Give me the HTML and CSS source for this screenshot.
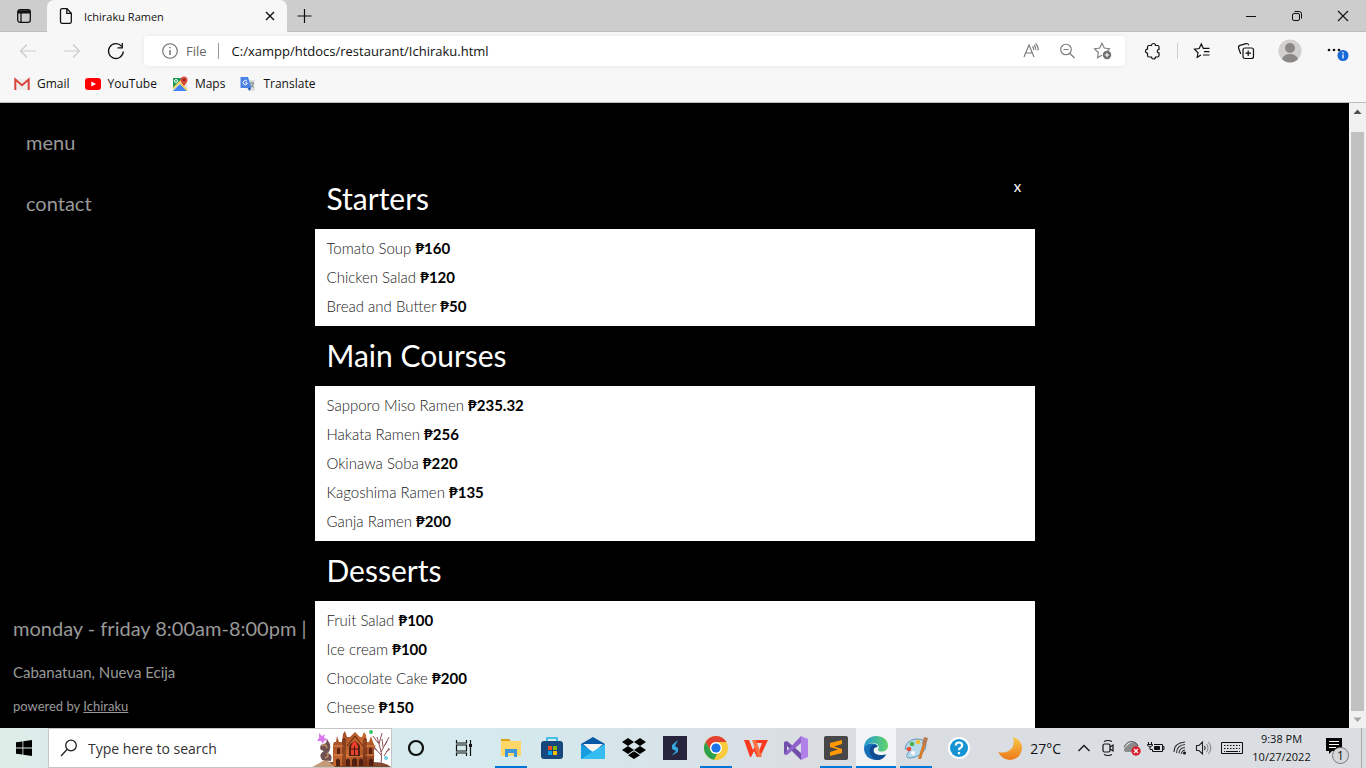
FILE: index.html
```html
<!DOCTYPE html>
<html lang="en">
<head>
<meta charset="utf-8">
<meta name="viewport" content="width=device-width, initial-scale=1">
<title>Ichiraku Ramen</title>
<link rel="stylesheet" href="styles.css">
</head>
<body>
<div class="desktop">
  <header class="browser">
    <div class="tabs">
      <button class="workspace" aria-label="Tab actions"><svg width="16" height="16" viewBox="0 0 16 16" fill="none" stroke="#111" stroke-width="1.3"><rect x="1.7" y="1.7" width="12.6" height="12.6" rx="2.2"/><path d="M2 3.2h12M2 4.4h12" stroke-width="2"/><path d="M5 5v9"/></svg></button>
      <div class="tab">
        <svg width="14" height="18" viewBox="0 0 14 18" fill="none" stroke="#111" stroke-width="1.3"><path d="M3 1.7h5l4.3 4.5v8.6a1.5 1.5 0 0 1-1.5 1.5H3a1.5 1.5 0 0 1-1.5-1.5V3.2A1.5 1.5 0 0 1 3 1.7zM7.8 2v4.4h4.4"/></svg>
        <span class="tab-title">Ichiraku Ramen</span>
        <button class="tab-close" aria-label="Close tab"><svg width="10" height="10" viewBox="0 0 10 10" stroke="#111" stroke-width="1.4"><path d="M1 1l8 8M9 1L1 9"/></svg></button>
      </div>
      <button class="new-tab" aria-label="New tab"><svg width="16" height="16" viewBox="0 0 16 16" stroke="#111" stroke-width="1.2"><path d="M7.5 1v14M.5 8h14"/></svg></button>
      <div class="window-controls">
        <button aria-label="Minimize"><svg width="10" height="10" viewBox="0 0 10 10" stroke="#111"><path d="M0 5.500h10"/></svg></button>
        <button aria-label="Restore"><svg width="12" height="12" viewBox="0 0 12 12" fill="none" stroke="#111"><rect x="1.500" y="3.500" width="7" height="7" rx="1.500"/><path d="M3.500 1.500h4.500a2.500 2.500 0 0 1 2.500 2.500v4.500"/></svg></button>
        <button aria-label="Close"><svg width="12" height="12" viewBox="0 0 12 12" stroke="#111" stroke-width="1.1"><path d="M1 1l10 10M11 1L1 11"/></svg></button>
      </div>
    </div>
    <div class="toolbar">
      <button class="tool" aria-label="Back"><svg width="18" height="16" viewBox="0 0 18 16" fill="none" stroke="#cbcbcb" stroke-width="1.2"><path d="M17 8H1.500M8 1.500L1.500 8 8 14.500"/></svg></button>
      <button class="tool" aria-label="Forward"><svg width="18" height="16" viewBox="0 0 18 16" fill="none" stroke="#cbcbcb" stroke-width="1.2"><path d="M1 8h15.500M10 1.500L16.500 8 10 14.500"/></svg></button>
      <button class="tool" aria-label="Refresh"><svg width="18" height="18" viewBox="0 0 18 18" fill="none" stroke="#111" stroke-width="1.3"><path d="M16.300 9.500a7.400 7.400 0 1 1-1.700-5.200M15.300 1v4.800h-4.800"/></svg></button>
      <div class="address">
        <svg width="18" height="18" viewBox="0 0 18 18" fill="none" stroke="#6b6b6b" stroke-width="1.1"><circle cx="9" cy="9" r="7.300"/><path d="M9 8v5M9 5v1.300" stroke-width="1.400"/></svg>
        <label class="scheme" for="url">File</label>
        <input class="url" id="url" type="text" value="C:/xampp/htdocs/restaurant/Ichiraku.html">
        <button class="address-tool" aria-label="Read aloud"><svg width="18" height="18" viewBox="0 0 18 18" fill="none" stroke="#777" stroke-width="1.1"><path d="M2 15L7 3l5 12M3.700 11h6.600M10.500 4.500q1.500 1.500 1.200 3.500M12 3q2.300 2.300 1.900 5.200M13.500 1.500q3.200 3 2.600 7"/></svg></button>
        <button class="address-tool" aria-label="Zoom out"><svg width="18" height="18" viewBox="0 0 18 18" fill="none" stroke="#777" stroke-width="1.1"><circle cx="8" cy="7.500" r="5.300"/><path d="M12 11.500l4.500 4.500M5.500 7.500h5"/></svg></button>
        <button class="address-tool" aria-label="Add to favorites"><svg width="20" height="18" viewBox="0 0 20 18" fill="none" stroke="#777" stroke-width="1.1"><path d="M9 13.200l-4.500 2.500.9-5.200L1.500 6.800l5.200-.8L9 1.300 11.300 6l5.200.8-2 2"/><circle cx="14" cy="13" r="4.200" fill="#6c6c6c" stroke="none"/><path d="M14 10.700v4.600M11.700 13h4.600" stroke="#fff"/></svg></button>
      </div>
      <button class="tool tool-first" aria-label="Extensions"><svg width="18" height="18" viewBox="0 0 18 18" fill="none" stroke="#111" stroke-width="1.200"><path d="M5 3.500h2.500a2 2 0 0 1 4 0h2a1.500 1.500 0 0 1 1.500 1.500v2.500a1.700 1.700 0 1 0 0 3.400V13.500a1.500 1.500 0 0 1-1.500 1.500h-2a2 2 0 0 1-4 0H5A1.500 1.500 0 0 1 3.500 13.500v-2.300a2 2 0 0 1 0-4V5A1.500 1.500 0 0 1 5 3.500z"/></svg></button>
      <span class="divider"></span>
      <button class="tool" aria-label="Favorites"><svg width="18" height="18" viewBox="0 0 18 18" fill="none" stroke="#111" stroke-width="1.200"><path d="M8 13l-3.800 2.300.8-4.500L1.500 7.200l4.700-.7L8.300 2l2 4.300h6.200M11 9.700h5.500M10 13h6.500"/></svg></button>
      <button class="tool" aria-label="Collections"><svg width="18" height="18" viewBox="0 0 18 18" fill="none" stroke="#111" stroke-width="1.200"><rect x="6" y="6" width="10.500" height="10.500" rx="2"/><path d="M11.200 8.500v5.500M8.500 11.200H14M3.700 12L1.600 6q-.5-2 1.400-2.600l6-1.800q2-.5 2.700 1.600"/></svg></button>
      <button class="tool" aria-label="Profile"><svg width="24" height="24" viewBox="0 0 24 24"><circle cx="12" cy="12" r="11.500" fill="#d2d0ce"/><circle cx="12" cy="9" r="5" fill="#8a8886"/><path d="M4 20q2-5 8-5t8 5q-3.500 3.500-8 3.500T4 20z" fill="#8a8886"/></svg></button>
      <button class="tool" aria-label="Settings and more"><svg width="24" height="24" viewBox="0 0 24 24"><g fill="#111"><circle cx="4" cy="11" r="1.300"/><circle cx="9" cy="11" r="1.300"/><circle cx="14" cy="11" r="1.300"/></g><circle cx="18" cy="16.500" r="5.500" fill="#1868d8"/><path d="M18 15.500v4M18 13v1.400" stroke="#fff" stroke-width="1.300"/></svg></button>
    </div>
    <nav class="bookmarks" aria-label="Favorites bar">
      <a href="#gmail"><svg width="16" height="16" viewBox="0 0 16 16"><path d="M1 3h14v11H1z" fill="#eee"/><path d="M1.300 14V3.500L8 9.200l6.700-5.700V14" fill="none" stroke="#d9453a" stroke-width="2"/></svg>Gmail</a>
      <a href="#youtube"><svg width="16" height="16" viewBox="0 0 16 16"><rect y="2" width="16" height="12" rx="3" fill="#f00"/><path d="M6.300 5.500v5L11 8z" fill="#fff"/></svg>YouTube</a>
      <a href="#maps"><svg width="16" height="16" viewBox="0 0 16 16"><path d="M1 2h14v13H1z" fill="#e5e3da"/><path d="M1 2h10L2 12H1z" fill="#1b9b58"/><path d="M1 15l7-7 7 7z" fill="#4284f3"/><path d="M1 12.500l8-8M8 7l7 7" stroke="#fbd04a" stroke-width="1.500"/><circle cx="4" cy="5" r="1.500" fill="none" stroke="#fff"/><path d="M12 .5a3.500 3.500 0 0 1 3.500 3.500Q15.500 6 12 10 8.500 6 8.500 4A3.500 3.500 0 0 1 12 .5z" fill="#df4a3d"/><circle cx="12" cy="4" r="1.300" fill="#7b211b"/></svg>Maps</a>
      <a href="#translate"><svg width="16" height="16" viewBox="0 0 16 16"><path d="M6 4h8.500v11H9z" fill="#dcdcdc"/><path d="M.5 1H8l3.500 11H.500z" fill="#4a82e6"/><path d="M7.500 12H11l-1.500 3z" fill="#2a54ae"/><path d="M7 5.200A2.200 2.200 0 1 0 7 8V6.800H5.200" fill="none" stroke="#fff"/><path d="M10 7h4M12 6v1M13.500 7q-.5 2.500-2 4M11 8.500l2.700 3" fill="none" stroke="#788"/></svg>Translate</a>
    </nav>
  </header>

  <div class="viewport">
    <main class="page">
      <nav class="site-nav">
        <a href="#menu">menu</a>
        <a href="#contact">contact</a>
      </nav>
      <footer class="site-footer">
        <p class="hours">monday - friday 8:00am-8:00pm |</p>
        <p class="place">Cabanatuan, Nueva Ecija</p>
        <p class="powered">powered by <a href="#ichiraku">Ichiraku</a></p>
      </footer>
      <div class="overlay">
        <div class="menu-card" id="menu">
          <button class="menu-close" aria-label="Close menu">x</button>
          <h1>Starters</h1>
          <ul>
            <li>Tomato Soup <b>₱160</b></li>
            <li>Chicken Salad <b>₱120</b></li>
            <li>Bread and Butter <b>₱50</b></li>
          </ul>
          <h1>Main Courses</h1>
          <ul>
            <li>Sapporo Miso Ramen <b>₱235.32</b></li>
            <li>Hakata Ramen <b>₱256</b></li>
            <li>Okinawa Soba <b>₱220</b></li>
            <li>Kagoshima Ramen <b>₱135</b></li>
            <li>Ganja Ramen <b>₱200</b></li>
          </ul>
          <h1>Desserts</h1>
          <ul class="last-course">
            <li>Fruit Salad <b>₱100</b></li>
            <li>Ice cream <b>₱100</b></li>
            <li>Chocolate Cake <b>₱200</b></li>
            <li>Cheese <b>₱150</b></li>
          </ul>
        </div>
      </div>
    </main>
    <div class="scrollbar" aria-hidden="true">
      <svg width="17" height="17" viewBox="0 0 17 17"><path d="M4.500 11h8l-4-4.500z" fill="#505050"/></svg>
      <span class="thumb"></span>
      <svg width="17" height="17" viewBox="0 0 17 17"><path d="M4.500 6.500h8l-4 4.500z" fill="#a3a3a3"/></svg>
    </div>
  </div>

  <footer class="taskbar">
    <button class="start" aria-label="Start"><svg width="16" height="16" viewBox="0 0 16 16"><path d="M0 2.300l6.500-.9v6.200H0zM7.300 1.300L16 0v7.600H7.300zM0 8.400h6.500v6.200L0 13.700zM7.300 8.400H16V16l-8.700-1.300z"/></svg></button>
    <div class="search">
      <svg width="18" height="18" viewBox="0 0 18 18" fill="none" stroke="#222" stroke-width="1.300"><circle cx="11" cy="6.500" r="5.300"/><path d="M7 10.500L1 17"/></svg>
      <input type="text" placeholder="Type here to search" aria-label="Type here to search">
      <svg class="castle" width="78" height="38" viewBox="0 0 78 38">
        <defs><linearGradient id="brick" x1="0" y1="0" x2="1" y2="1"><stop offset="0" stop-color="#8f4424"/><stop offset=".5" stop-color="#c96a30"/><stop offset="1" stop-color="#7d3017"/></linearGradient></defs>
        <path d="M0 38q6-4 14-5h46q12 0 18 5z" fill="#80482c"/>
        <path d="M0 38l13-8 9 8z" fill="#c59a78"/>
        <path d="M68 36q1-9 0-14M68 26l-8-9M68 23l6-11M68 22l-4-14M62 19l-4-8M65 14l-5-7M66 15l3-11M70 18l-1-8M72 16l4-8M71 27l5-8M64 21l-7-3M73 23l4-3" fill="none" stroke="#915050" stroke-width="1"/>
        <path d="M9 31q-4-6 2-9-6-1-3-6l5-2 1-4 3 5q1 6-2 9 5 2 3 8z" fill="#6f5053"/>
        <path d="M9 17q4-3 5 2M12 29q5-2 2-5" stroke="#c8925c" fill="none" stroke-width="1.400"/>
        <path d="M20 37V16l1-3h2l1-6 2 6h3l1-8 2-3 2 6h3l5-5 5 5h2l2-5 2 3 1 7h2l2-6 2 6 1 3v21z" fill="url(#brick)"/>
        <path d="M30 37V10h2v27M51 37V10h2v27M34 17l8-10 8 10" stroke="#5f2412" fill="none"/>
        <path d="M20 17h10M53 17h10M21 26h9M53 26h9M33 27h17" stroke="#e08a4a"/>
        <path d="M36 27V17q6-9 11 0v10z" fill="#572014"/><path d="M38 26v-9q4-6 7 0v9z" fill="#e0432a"/><path d="M41.500 13v13M38 20h7" stroke="#4b1515"/>
        <circle cx="41.500" cy="15" r="2.300" fill="#f13b28"/>
        <path d="M24 25v-5q1.500-3 3 0v5zM56 25v-5q1.500-3 3 0v5z" fill="#5c2012"/>
        <path d="M23 37v-6q2-3 4 0v6M56 37v-6q2-3 4 0v6M33 37v-6q2-3 4 0v6M46 37v-6q2-3 4 0v6M39 37v-6q3-4 5 0v6" fill="#4e1f12"/>
        <path d="M6 4l3 3 3-2-1 4 4 1-4 2-1 3-2-3-4 0 2-3z" fill="#dc78ee"/><circle cx="58" cy="3" r="2" fill="#36cb6a"/><circle cx="73" cy="29" r="2" fill="#70cce2"/>
      </svg>
    </div>
    <div class="system-apps">
      <button aria-label="Cortana"><svg width="20" height="20" viewBox="0 0 20 20" fill="none" stroke="#111" stroke-width="2.200"><circle cx="10" cy="10" r="7"/></svg></button>
      <button aria-label="Task View"><svg width="18" height="16" viewBox="0 0 18 16" fill="none" stroke="#111" stroke-width="1.200"><path d="M1.500 0v3h10V0M1.500 16v-3h10v3M1.500 5h10v6h-10zM15.500 0v16"/><path d="M14 4h3v3h-3z" fill="#111" stroke="none"/></svg></button>
    </div>
    <div class="apps apps-pinned">
      <button class="running" aria-label="File Explorer"><svg width="24" height="24" viewBox="0 0 24 24"><path d="M2 3h8l2 2h10v15H2z" fill="#dda018"/><path d="M2 5h20v15H2z" fill="#ffd768"/><path d="M6 21v-8h12v8h-3v-4H9v4z" fill="#3a96dd"/></svg></button>
      <button aria-label="Microsoft Store"><svg width="24" height="24" viewBox="0 0 24 24"><path d="M7 7V2h10v5" fill="none" stroke="#45bfe6" stroke-width="2"/><rect y="5" x="1" width="22" height="18" rx="3" fill="#17477c"/><path d="M8 10h4v4H8z" fill="#f25022"/><path d="M13 10h4v4h-4z" fill="#7fba00"/><path d="M8 15h4v4H8z" fill="#00a4ef"/><path d="M13 15h4v4h-4z" fill="#ffb900"/></svg></button>
      <button aria-label="Mail"><svg width="24" height="24" viewBox="0 0 24 24"><path d="M0 8l12-7 12 7v5H0z" fill="#0858a5"/><path d="M2 8h20l-10 9z" fill="#f4f4f4"/><path d="M0 8l12 8 12-8v15H0z" fill="#169cdf"/><path d="M0 23L24 8v15z" fill="#35bcf1"/></svg></button>
      <button aria-label="Dropbox"><svg width="24" height="24" viewBox="0 0 24 24"><path d="M6 2l6 4-6 4-6-4zM18 2l6 4-6 4-6-4zM6 10l6 4-6 4-6-4zM18 10l6 4-6 4-6-4zM6 19.200l6-4 6 4-6 3.800z"/></svg></button>
      <button aria-label="Shortcut app"><svg width="24" height="24" viewBox="0 0 24 24"><path d="M0 0h24v24H0z" fill="#27243e"/><path d="M15 4l-6 5v4l4 2-5 5 7-4v-4l-3-2z" fill="#35a7df"/></svg></button>
      <button class="running" aria-label="Chrome"><svg width="24" height="24" viewBox="0 0 24 24"><circle cx="12" cy="12" r="12" fill="#f9cb3c"/><path d="M1.600 6A12 12 0 0 1 22.400 6H12a6 6 0 0 0-5.200 9z" fill="#e34133"/><path d="M1.600 6l5.200 9A6 6 0 0 0 13 18l-3 5.800A12 12 0 0 1 1.600 6z" fill="#2aa14d"/><circle cx="12" cy="12" r="6" fill="#fff"/><circle cx="12" cy="12" r="4.600" fill="#1a73e8"/></svg></button>
    </div>
    <div class="apps">
      <button aria-label="WPS Office"><svg width="24" height="24" viewBox="0 0 24 24"><path d="M0 4h5l4 10 3-6 3 7 3-8h-8V4h14l-8 17h-3l-3-6-3 6H6z" fill="#f9391d"/><path d="M8 4h4l6 17h-4z" fill="#ff7042"/></svg></button>
      <button aria-label="Visual Studio"><svg width="24" height="24" viewBox="0 0 24 24"><path d="M17 0l7 3v18l-7 3z" fill="#b180e8"/><path d="M0 6l3-1 14 12V24L3 10v9l-3-1z" fill="#704eaa"/><path d="M0 18l17-18v7L3 19z" fill="#8f61cb"/></svg></button>
      <button class="running" aria-label="Sublime Text"><svg width="24" height="24" viewBox="0 0 24 24"><rect width="24" height="24" rx="2" fill="#474747"/><path d="M6 7l12-3v4l-8 2.500 8 2.500v4L6 20v-4l8-2.500L6 11z" fill="#ff9800"/></svg></button>
      <button class="running current" aria-label="Edge"><svg width="24" height="24" viewBox="0 0 24 24"><defs><linearGradient id="wave"><stop stop-color="#219bd5"/><stop offset="1" stop-color="#64d565"/></linearGradient></defs><path d="M0 12C0 5 5 0 12 0s12 4 12 9.500c0 4-3 6-6.500 6s-4-1.500-3-3S14 7 9 7 1 10 0 12z" fill="url(#wave)"/><path d="M0 12q2-5 8.500-4.500C13 8 14 10 13.500 11q-5 0-4 4.500 2 5 12.500 3-3.500 5.500-10 5.500C5 24 0 19 0 12z" fill="#1671b9"/><path d="M9 9q-5 3-3 8.500T13 24q6 0 9-5.500Q12 21 9.500 15.500 9 11 13.500 11 12 8 9 9z" fill="#104c91"/></svg></button>
      <button class="running" aria-label="Paint"><svg width="24" height="24" viewBox="0 0 24 24"><path d="M1 13q1-9 11-10 9-.5 10 6 .5 5-5 9t-11 4-2-5-3-4z" fill="#b6d9eb" stroke="#6699b8"/><circle cx="5" cy="13" r="2.300" fill="#e84f3d"/><circle cx="8" cy="8" r="2.300" fill="#4cb24d"/><circle cx="14" cy="6" r="2.300" fill="#f1bf33"/><circle cx="9" cy="17" r="2" fill="#fff"/><path d="M14 23l5-16 3 1-5 15z" fill="#d57b2d"/><path d="M18 8l2-7 4 1-2 7z" fill="#b77a55"/></svg></button>
      <button class="help" aria-label="Get Help"><svg width="24" height="24" viewBox="0 0 24 24"><circle cx="12" cy="12" r="11" fill="#fff"/><circle cx="12" cy="12" r="9" fill="#1694d4"/><path d="M8.800 9.500q0-3 3.200-3t3.200 2.800q0 1.500-1.700 2.500t-1.500 2.400M12 16v2.200" fill="none" stroke="#fff" stroke-width="2.200"/></svg></button>
    </div>
    <div class="tray">
      <button class="weather"><svg width="24" height="24" viewBox="0 0 24 24"><defs><linearGradient id="moon" x2="0" y2="1"><stop stop-color="#f9c748"/><stop offset="1" stop-color="#ec7919"/></linearGradient></defs><path d="M15 1q9 3 9 11-1 11-12 12Q4 23.500 0 16q9 2 14-4 3-5 1-11z" fill="url(#moon)"/></svg>27°C</button>
      <button class="tray-icon" aria-label="Show hidden icons"><svg width="14" height="8" viewBox="0 0 14 8" fill="none" stroke="#111" stroke-width="1.300"><path d="M1.500 7L7 1.500 12.500 7"/></svg></button>
      <button class="tray-icon" aria-label="Meet Now"><svg width="16" height="18" viewBox="0 0 16 18" fill="none" stroke="#111" stroke-width="1.200"><rect x="3" y="5" width="7" height="8" rx="1.500"/><path d="M10 8l3-2v6l-3-2M4 2.500q4-2 8 0M4 15.500q4 2 8 0"/></svg></button>
      <button class="tray-icon" aria-label="OneDrive"><svg width="18" height="16" viewBox="0 0 18 16"><path d="M1 10q0-3 3-4 4-5 9-3 2 1 2 4-4-1-7 5H4q-3 0-3-2z" fill="#8b8b8b"/><path d="M1 7q4-7 10-5 3 1 4 4" fill="none" stroke="#444"/><circle cx="13" cy="11" r="4.700" fill="#d81d2b"/><path d="M11 9l4 4m0-4l-4 4" stroke="#fff" stroke-width="1.200"/></svg></button>
      <button class="tray-icon" aria-label="Battery"><svg width="18" height="14" viewBox="0 0 18 14" fill="none" stroke="#111" stroke-width="1"><path d="M7 3.500h8.500v7h-10v-2M15.500 5.500h1.500v3h-1.500M.5 3.500h5v1q-2.500 3-5 0zM1.500 1v2.500M4.500 1v2.500M3 6v2.500h2.500"/><path d="M7.500 5.500h5v3h-5z" fill="#111"/></svg></button>
      <button class="tray-icon" aria-label="Wi-Fi"><svg width="14" height="14" viewBox="0 0 14 14" fill="none" stroke="#333" stroke-width="1.100"><path d="M1 11q0-9 11-10M3.500 12q0-7.500 8.500-8.500M6 12.500q0-5.500 6-6M8.500 13q0-3.500 3.500-4"/><circle cx="11.500" cy="12" r="1.500" fill="#111" stroke="none"/></svg></button>
      <button class="tray-icon" aria-label="Volume"><svg width="18" height="16" viewBox="0 0 18 16" fill="none" stroke="#222" stroke-width="1.100"><path d="M1.500 5.500H4L7.500 2v12L4 10.500H1.500zM9.500 6q1.500 2 0 4"/><path d="M11.500 4q3 4 0 8M13.500 2q4.500 6 0 12" stroke="#888"/></svg></button>
      <button class="keyboard" aria-label="Touch keyboard"><svg width="24" height="14" viewBox="0 0 24 14" fill="none" stroke="#111"><path d="M1.500 1.500h21v11h-21z"/><path d="M4 4.500h16M4 7.500h16" stroke-dasharray="1.500 1.500"/><path d="M6 10.500h12M4 10.500h1M19 10.500h1"/></svg></button>
      <button class="clock"><span>9:38 PM</span><span>10/27/2022</span></button>
      <button class="notifications" aria-label="Notifications"><svg width="26" height="26" viewBox="0 0 26 26"><path d="M1 3h16v13H7l-3 3v-3H1z"/><path d="M4 6.500h10M4 9.500h10M4 12.500h7" stroke="#fff" stroke-width="1.200"/></svg><span class="count">1</span></button>
      <span class="show-desktop"></span>
    </div>
  </footer>
</div>
</body>
</html>
```

FILE: styles.css
```css
* { box-sizing: border-box; }

body {
  margin: 0;
  font-family: "Open Sans", "Noto Sans", sans-serif;
  font-size: 12px;
  color: #111;
}

button {
  display: flex;
  align-items: center;
  justify-content: center;
  padding: 0;
  border: 0;
  background: none;
  color: inherit;
  font: inherit;
}

input {
  min-width: 0;
  border: 0;
  padding: 0;
  outline: 0;
  background: none;
  font: inherit;
  color: inherit;
}

svg { flex: none; }

.desktop {
  display: flex;
  flex-direction: column;
  height: 100vh;
  overflow: hidden;
}

/* Browser window */
.browser {
  flex: none;
  background: #f7f7f7;
  border-bottom: 1px solid #bcbcbc;
}

.tabs {
  display: flex;
  height: 32px;
  background: #cdcdcd;
  box-shadow: inset 0 -1px #bdbdbd;
}

.workspace { width: 47px; }

.tab {
  display: flex;
  align-items: center;
  width: 240px;
  padding: 0 10px 0 12px;
  border-radius: 7px 7px 0 0;
  background: #f7f7f7;
}

.tab-title { flex: 1; padding-left: 11px; font-size: 11px; }
.tab-close { width: 14px; height: 20px; }
.new-tab { width: 36px; }
.window-controls { display: flex; margin-left: auto; }
.window-controls button { width: 46px; }

.toolbar {
  display: flex;
  align-items: center;
  height: 38px;
  padding: 0 4px 0 6px;
}

.tool { width: 44px; height: 32px; }
.tool-first { margin-left: 6px; }
.tool:last-child { width: 50px; }
.divider { width: 1px; height: 16px; margin: 0 2px; background: #cdcdcd; }

.address {
  display: flex;
  flex: 1;
  align-items: center;
  height: 30px;
  margin-left: 6px;
  padding: 0 4px 0 17px;
  border-radius: 4px;
  background: #fff;
  box-shadow: 0 0 4px #e6e6e6;
}

.scheme {
  margin: 0 13px 0 7px;
  padding-right: 11px;
  border-right: 1px solid #999;
  color: #666;
  font-size: 13px;
  line-height: 16px;
}

.url { flex: 1; font-size: 13px; }
.address-tool { width: 36px; height: 30px; }

.bookmarks {
  display: flex;
  align-items: center;
  gap: 15px;
  height: 32px;
  padding: 0 14px 5px;
}

.bookmarks a {
  display: flex;
  align-items: center;
  gap: 7px;
  color: inherit;
  font-size: 12px;
  text-decoration: none;
}

/* Restaurant page */
.viewport { display: flex; flex: 1; min-height: 0; }

.page {
  position: relative;
  display: flex;
  flex: 1;
  flex-direction: column;
  justify-content: space-between;
  overflow: hidden;
  background: #000;
  color: #999;
  font-family: Lato, sans-serif;
}

.site-nav {
  display: flex;
  flex-direction: column;
  align-items: flex-start;
  gap: 37px;
  padding: 27px 26px;
}

.site-nav a {
  color: inherit;
  font-size: 20px;
  line-height: 24px;
  text-decoration: none;
}

.site-footer { padding: 0 13px 13px; }
.site-footer p { margin: 0; }
.site-footer a { color: inherit; }
.hours { font-size: 20px; line-height: 24px; }
.site-footer .place { margin: 20px 0 13px; font-size: 15px; line-height: 24px; }
.powered { font-size: 13px; line-height: 18px; }

.overlay {
  position: absolute;
  inset: 0;
  display: flex;
  align-items: flex-start;
  justify-content: center;
  padding-top: 66px;
  pointer-events: none;
}

.menu-card {
  position: relative;
  width: 720px;
  background: #000;
  pointer-events: auto;
}

.menu-card h1 {
  margin: 0;
  padding: 0 12px 2px;
  color: #fff;
  font-size: 30px;
  font-weight: 400;
  line-height: 58px;
}

.menu-card ul {
  margin: 0;
  padding: 5px 12px;
  background: #fff;
  color: #222;
  list-style: none;
}

.menu-card .last-course { padding-bottom: 12px; }
.menu-card li { font-size: 15px; font-weight: 300; line-height: 29px; }
.menu-card b { color: #000; font-weight: 700; }

.menu-close {
  position: absolute;
  top: 7px;
  right: 4px;
  width: 26px;
  height: 20px;
  color: #fff;
  font-size: 15px;
}

.scrollbar {
  display: flex;
  flex-direction: column;
  width: 17px;
  background: #f1f1f1;
}

.thumb { flex: 1; margin: 12px 2px 0; background: #c1c1c1; }

/* Taskbar */
.taskbar {
  display: flex;
  flex: none;
  height: 40px;
  background: linear-gradient(90deg, #deece8, #d4eaee 36%, #dadee3 58%, #dadde2);
}

.start { width: 48px; }

.search {
  display: flex;
  align-items: center;
  width: 344px;
  padding-left: 11px;
  border: 1px solid #c5c5c5;
  background: #fff;
}

.search input { flex: 1; margin-left: 10px; font-size: 14px; }
.search input::placeholder { color: #333; opacity: 1; }
.castle { align-self: flex-end; }
.system-apps, .apps, .tray { display: flex; }
.system-apps button { width: 48px; }
.system-apps { margin-right: 3px; }
.apps button { width: 40px; }
.apps .help { width: 46px; }
.apps-pinned { gap: 1px; }

.running {
  background: linear-gradient(#0076d7, #0076d7) bottom / 32px 2px no-repeat;
}

.running.current {
  background: linear-gradient(#0076d7, #0076d7) bottom / 40px 2px no-repeat, #f2f3f4;
}

.tray { margin-left: auto; }
.weather { gap: 8px; margin-right: 11px; font-size: 14px; }
.tray-icon { width: 24px; }
.keyboard { width: 32px; }

.clock {
  flex-direction: column;
  width: 67px;
  font-size: 11px;
  line-height: 18px;
}

.notifications { position: relative; width: 46px; }

.count {
  position: absolute;
  right: 12px;
  bottom: 4px;
  width: 17px;
  height: 17px;
  border: 1px solid #777;
  border-radius: 50%;
  background: #d5d7db;
  font-size: 12px;
  line-height: 15px;
}

.show-desktop { width: 5px; border-left: 1px solid #aaa; }
```
